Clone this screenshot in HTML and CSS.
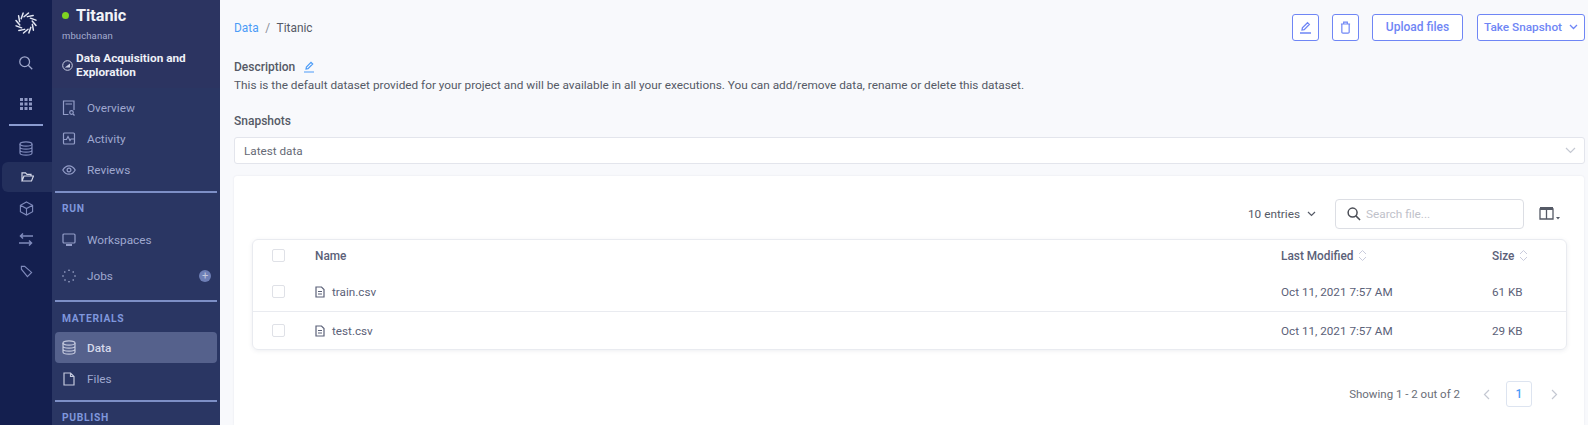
FILE: index.html
```html
<!DOCTYPE html>
<html lang="en">
<head>
<meta charset="utf-8">
<title>Titanic</title>
<link rel="stylesheet" href="styles.css">
</head>
<body>
<div class="app">
  <nav class="rail">
    <div class="rail-item logo"><svg width="24" height="24" viewBox="0 0 24 24" fill="none" stroke="#e3e7f3" stroke-width="1.500" stroke-linecap="round"><path d="M10 5.800L14.500 2"/><path transform="rotate(30 12 12)" d="M10 5.800L14.500 2"/><path transform="rotate(60 12 12)" d="M10 5.800L14.500 2"/><path transform="rotate(90 12 12)" d="M10 5.800L14.500 2"/><path transform="rotate(120 12 12)" d="M10 5.800L14.500 2"/><path transform="rotate(150 12 12)" d="M10 5.800L14.500 2"/><path transform="rotate(180 12 12)" d="M10 5.800L14.500 2"/><path transform="rotate(210 12 12)" d="M10 5.800L14.500 2"/><path transform="rotate(240 12 12)" d="M10 5.800L14.500 2"/><path transform="rotate(270 12 12)" d="M10 5.800L14.500 2"/><path transform="rotate(300 12 12)" d="M10 5.800L14.500 2"/><path transform="rotate(330 12 12)" d="M10 5.800L14.500 2"/></svg></div>
    <div class="rail-item search"><svg class="ic soft" width="16" height="16" viewBox="0 0 18 18"><circle cx="7.500" cy="7.500" r="5.500"/><path d="M11.500 11.500L16 16"/></svg></div>
    <div class="rail-item apps"><svg width="12" height="12" viewBox="0 0 12 12" fill="#8f99c4"><rect width="3" height="3"/><rect x="4.500" width="3" height="3"/><rect x="9" width="3" height="3"/><rect y="4.500" width="3" height="3"/><rect x="4.500" y="4.500" width="3" height="3"/><rect x="9" y="4.500" width="3" height="3"/><rect y="9" width="3" height="3"/><rect x="4.500" y="9" width="3" height="3"/><rect x="9" y="9" width="3" height="3"/></svg></div>
    <div class="rail-line"></div>
    <div class="rail-item db"><svg class="ic dim" width="14" height="15" viewBox="0 0 14 15"><ellipse cx="7" cy="3" rx="6" ry="2.200"/><path d="M1 3v9c0 1.200 2.700 2.200 6 2.200s6-1 6-2.200V3M1 6c0 1.200 2.700 2.200 6 2.200S13 7.200 13 6M1 9c0 1.200 2.700 2.200 6 2.200s6-1 6-2.200"/></svg></div>
    <div class="rail-item folder active"><svg class="ic bright" width="13" height="10" viewBox="0 0 13 10"><path d="M1 9V.8h3.500L6 2.300h4v1.800M1 9h9.500L12.500 4H3z"/></svg></div>
    <div class="rail-item cube"><svg class="ic dim" width="15" height="15" viewBox="0 0 16 16"><path d="M8 1l6.500 3.500v7L8 15l-6.500-3.500v-7zM1.500 4.500L8 8l6.500-3.500M8 8v7"/></svg></div>
    <div class="rail-item arrows"><svg class="ic dim thick" width="14" height="13" viewBox="0 0 14 13"><path d="M14 3H1.500M4 .5L1.500 3 4 5.500M0 10h12.500M10 7.500l2.500 2.500-2.500 2.500"/></svg></div>
    <div class="rail-item tag"><svg class="ic dim" width="13" height="13" viewBox="0 0 14 14"><path d="M1.500 4.500V1.500H5L12.500 8 8 12.500z"/></svg></div>
  </nav>

  <aside class="side">
    <header class="side-head">
      <div class="title-row"><span class="dot"></span><span class="title">Titanic</span></div>
      <div class="owner">mbuchanan</div>
      <div class="stage">
        <svg width="11" height="11" viewBox="0 0 11 11" fill="none" stroke="#c8cde2"><circle cx="5.500" cy="5.500" r="4.800"/><path d="M2.800 7.500L8 3.500v4z" fill="#c8cde2" stroke="none"/></svg>
        <span>Data Acquisition and Exploration</span>
      </div>
    </header>
    <div class="nav">
      <a class="nav-item first"><svg class="ic nav-ic" width="13" height="16" viewBox="0 0 13 16"><path d="M6 14.500H1V1h10.500v9M3 4h6.500"/><circle cx="9" cy="12.500" r="1.800"/><path d="M10.500 14l1.500 1.500"/></svg><span>Overview</span></a>
      <a class="nav-item"><svg class="ic nav-ic" width="13" height="13" viewBox="0 0 13 13"><rect x="1" y="1" width="11" height="11" rx="1"/><path d="M1 7.500h3l1.500-3 2 4 1-1.500H12"/></svg><span>Activity</span></a>
      <a class="nav-item"><svg class="ic nav-ic" width="14" height="10" viewBox="0 0 14 10"><path d="M.8 5C2.500 2 4.500.8 7 .8S11.500 2 13.200 5C11.500 8 9.500 9.200 7 9.200S2.500 8 .8 5z"/><circle cx="7" cy="5" r="1.900"/></svg><span>Reviews</span></a>
      <div class="rule"></div>
      <div class="section">RUN</div>
      <a class="nav-item"><svg class="ic nav-ic" width="14" height="13" viewBox="0 0 14 13"><rect x="1" y="1" width="12" height="9" rx="1"/><path d="M4 12h6" stroke-width="2"/></svg><span>Workspaces</span></a>
      <a class="nav-item jobs"><svg class="nav-ic" width="14" height="14" viewBox="0 0 14 14" fill="#aab3d6"><circle cx="7" cy="1.200" r=".8"/><circle cx="11.200" cy="3" r=".8"/><circle cx="13" cy="7" r=".8"/><circle cx="11.200" cy="11" r=".8"/><circle cx="7" cy="12.800" r=".8"/><circle cx="3" cy="11" r=".8"/><circle cx="1" cy="7" r=".8"/><circle cx="2.800" cy="3" r=".8"/></svg><span>Jobs</span><i class="plus">+</i></a>
      <div class="rule rule-b"></div>
      <div class="section materials">MATERIALS</div>
      <a class="nav-item current"><svg class="ic nav-ic light" width="14" height="15" viewBox="0 0 14 15"><ellipse cx="7" cy="3" rx="6" ry="2.200"/><path d="M1 3v9c0 1.200 2.700 2.200 6 2.200s6-1 6-2.200V3M1 6c0 1.200 2.700 2.200 6 2.200S13 7.200 13 6M1 9c0 1.200 2.700 2.200 6 2.200s6-1 6-2.200"/></svg><span>Data</span></a>
      <a class="nav-item"><svg class="ic nav-ic light" width="12" height="14" viewBox="0 0 12 14"><path d="M1 1h6.500L11 4.500V13H1zM7.500 1v3.500H11"/></svg><span>Files</span></a>
      <div class="rule rule-c"></div>
      <div class="section">PUBLISH</div>
    </div>
  </aside>

  <main class="main">
    <div class="top">
      <div class="crumbs"><a class="link">Data</a><span class="sep">/</span><span>Titanic</span></div>
      <div class="actions">
        <button class="btn square"><svg class="ic blue" width="13" height="13" viewBox="0 0 13 13"><path d="M3 9l.4-2.200L8.500 1.700l1.800 1.800L5.200 8.600zM1 12h11"/></svg></button>
        <button class="btn square"><svg class="ic blue" width="11" height="13" viewBox="0 0 12 14"><path d="M2 3.500V12a1.200 1.200 0 0 0 1.200 1.200h5.600A1.200 1.200 0 0 0 10 12V3.500M1 3.200h10M4 3V1.200h4V3"/></svg></button>
        <button class="btn upload">Upload files</button>
        <button class="btn snap">Take Snapshot<svg class="ic blue sw" width="9" height="6" viewBox="0 0 9 6"><path d="M1 1l3.500 3.500L8 1"/></svg></button>
      </div>
    </div>
    <div class="desc-label">Description<svg class="ic sky" width="12" height="12" viewBox="0 0 11 12"><path d="M2.500 8l.4-2L7.500 1.300l1.700 1.700L4.500 7.600zM.5 11h10"/></svg></div>
    <p class="desc">This is the default dataset provided for your project and will be available in all your executions. You can add/remove data, rename or delete this dataset.</p>
    <div class="snap-label">Snapshots</div>
    <div class="select"><span>Latest data</span><svg class="ic pale" width="11" height="7" viewBox="0 0 11 7"><path d="M1 1l4.500 4.500L10 1"/></svg></div>

    <section class="card">
      <div class="tools">
        <div class="entries">10 entries<svg class="ic grey" width="9" height="6" viewBox="0 0 9 6"><path d="M1 1l3.500 3.500L8 1"/></svg></div>
        <div class="searchbox"><svg class="ic ink" width="14" height="14" viewBox="0 0 15 15"><circle cx="6" cy="6" r="4.800"/><path d="M9.500 9.500L14 14"/></svg><span>Search file...</span></div>
        <div class="columns"><svg width="21" height="15" viewBox="0 0 21 15"><path d="M1 3h13v10H1zM7.500 3v10" fill="none" stroke="#555a66" stroke-width="1.300"/><rect x="1" y="1" width="13" height="3" fill="#555a66"/><path d="M17 11h4l-2 2.500z" fill="#555a66"/></svg></div>
      </div>
      <div class="table">
        <div class="row head">
          <span class="check"></span>
          <span class="name">Name</span>
          <span class="mod">Last Modified<svg class="sort" width="9" height="13" viewBox="0 0 9 13"><path d="M1 5l3.500-3.500L8 5M1 8l3.500 3.500L8 8"/></svg></span>
          <span class="size">Size<svg class="sort" width="9" height="13" viewBox="0 0 9 13"><path d="M1 5l3.500-3.500L8 5M1 8l3.500 3.500L8 8"/></svg></span>
        </div>
        <div class="row body first-row">
          <span class="check"></span>
          <span class="name"><svg class="ic file" width="10" height="12" viewBox="0 0 10 12"><path d="M1 1h5.500L9 3.500V11H1zM3 5.500h4M3 8h4"/></svg>train.csv</span>
          <span class="mod">Oct 11, 2021 7:57 AM</span>
          <span class="size">61 KB</span>
        </div>
        <div class="row body last-row">
          <span class="check"></span>
          <span class="name"><svg class="ic file" width="10" height="12" viewBox="0 0 10 12"><path d="M1 1h5.500L9 3.500V11H1zM3 5.500h4M3 8h4"/></svg>test.csv</span>
          <span class="mod">Oct 11, 2021 7:57 AM</span>
          <span class="size">29 KB</span>
        </div>
      </div>
      <div class="pager">
        <span class="showing">Showing 1 - 2 out of 2</span>
        <svg class="ic pale chev-l" width="7" height="11" viewBox="0 0 7 11"><path d="M6 1L1.500 5.500 6 10"/></svg>
        <span class="page">1</span>
        <svg class="ic pale chev-r" width="7" height="11" viewBox="0 0 7 11"><path d="M1 1l4.500 4.500L1 10"/></svg>
      </div>
    </section>
  </main>
</div>
</body>
</html>
```

FILE: styles.css
```css
* { box-sizing: border-box; }
html, body { margin: 0; height: 100%; overflow: hidden; }
body { font-family: Roboto, "Liberation Sans", sans-serif; font-size: 12px; color: #555a66; background: #f8f9fc; }
button { font-family: inherit; cursor: pointer; }
.ic { fill: none; stroke: #939dc8; stroke-width: 1.200; flex: none; }
.ic.dim { stroke: #7f8abb; }
.ic.soft { stroke: #a0a8cc; stroke-width: 1.400; }
.ic.thick { stroke-width: 1.500; }
.ic.bright { stroke: #d5d9ea; }
.ic.light { stroke: #c3c8dd; }
.ic.blue { stroke: #6f86f5; stroke-width: 1.300; }
.ic.sky { stroke: #4c9cf7; }
.ic.pale { stroke: #c4c8d2; }
.ic.grey { stroke: #555a66; margin-left: 7px; }
.ic.ink { stroke: #4a4d55; stroke-width: 1.600; }

.app { display: flex; width: 1588px; height: 425px; overflow: hidden; }

.rail { width: 52px; flex: none; background: #141f4f; display: flex; flex-direction: column; align-items: center; }
.rail-item { width: 100%; display: flex; align-items: center; justify-content: center; flex: none; }
.logo { height: 48px; padding-bottom: 2px; }
.search { height: 30px; }
.apps { height: 46px; padding-top: 5px; }
.rail-line { width: 34px; height: 2px; background: #8a9bd0; flex: none; }
.db { height: 36px; padding-top: 8px; }
.folder { height: 30px; margin-left: 2px; width: 50px; }
.folder.active { background: #232f5c; border-radius: 6px 0 0 6px; }
.cube { height: 32px; }
.arrows { height: 31px; }
.tag { height: 32px; }

.side { width: 168px; flex: none; background: #2a3663; color: #9fa8cf; }
.side-head { height: 88px; background: #2c3461; padding: 5px 12px 0 10px; }
.title-row { display: flex; align-items: center; height: 20px; }
.dot { width: 7px; height: 7px; border-radius: 50%; background: #7ed321; margin-right: 7px; }
.title { font-size: 16.200px; font-weight: 700; color: #f2f3f8; }
.owner { font-size: 9.500px; color: #a5acd0; margin-top: 4px; height: 14px; line-height: 14px; letter-spacing: .1px; }
.stage { display: flex; align-items: center; gap: 3px; margin-top: 8px; color: #eef0f7; font-size: 11.800px; font-weight: 700; line-height: 14px; }
.stage svg { flex: none; }

.nav { padding: 5px 3px 0; }
.nav-item { display: flex; align-items: center; height: 31px; padding-left: 6px; font-size: 11.800px; color: #9fa8cf; }
.nav-item.first { height: 30px; }
.nav-item svg { width: 16px; }
.nav-item svg + span { margin-left: 10px; }
.rule { height: 2px; background: #7d8fc6; margin: 6px 0 0; }
.rule-b { margin-top: 4px; }
.rule-c { margin-top: 6px; }
.section { font-size: 10.300px; font-weight: 700; letter-spacing: .7px; color: #7f97dc; padding-left: 7px; height: 31px; line-height: 31px; }
.section.materials { height: 27px; line-height: 27px; margin-top: 3px; }
.nav-item.jobs { height: 41px; padding-right: 6px; }
.plus { margin-left: auto; width: 12px; height: 12px; border-radius: 50%; background: #6e7fb6; color: #c3c8dd; font-style: normal; font-size: 11px; line-height: 12px; text-align: center; }
.nav-item.current { background: #55618c; border-radius: 4px; color: #d5d9ea; font-weight: 500; }

.main { flex: 1; min-width: 0; padding: 13px 3px 0 14px; }
.top { display: flex; justify-content: space-between; align-items: center; height: 28px; }
.crumbs { display: flex; align-items: center; font-size: 11.900px; color: #555a66; padding-top: 2px; }
.link { color: #4c9cf7; }
.sep { margin: 0 6.500px; color: #8a8e98; }
.actions { display: flex; align-items: center; }
.btn { height: 27px; border: 1px solid #6f86f5; background: #fff; border-radius: 3px; color: #6f86f5; font-size: 12px; font-weight: 500; display: flex; align-items: center; justify-content: center; padding: 0; }
.square { width: 27px; margin-right: 13px; }
.upload { width: 91px; margin-right: 14px; }
.snap { width: 108px; font-size: 11.800px; }
.sw { margin-left: 7px; }

.desc-label { display: flex; align-items: center; font-size: 12px; font-weight: 500; color: #555a66; margin-top: 18px; height: 16px; }
.desc-label svg { margin-left: 8px; }
.desc { margin: 2px 0 0; font-size: 11.800px; line-height: 16px; color: #555a66; }
.snap-label { margin-top: 20px; height: 16px; line-height: 16px; font-size: 12px; font-weight: 500; color: #555a66; }
.select { display: flex; justify-content: space-between; align-items: center; height: 27px; margin-top: 8px; background: #fff; border: 1px solid #e3e5ec; border-radius: 3px; padding: 0 8px 0 9px; font-size: 11.700px; color: #666a75; }

.card { background: #fff; border-radius: 3px 3px 0 0; margin: 12px 1px 0 0; height: 249px; padding: 23px 17px 0 18px; box-shadow: 0 0 2px rgba(80, 90, 120, .12); }
.tools { display: flex; justify-content: flex-end; align-items: center; height: 29px; }
.entries { display: flex; align-items: center; font-size: 11.800px; color: #555a66; margin-right: 19px; }
.searchbox { display: flex; align-items: center; width: 189px; height: 30px; border: 1px solid #dcdee4; border-radius: 4px; padding-left: 11px; color: #bfc2ca; font-size: 11.800px; }
.searchbox span { margin-left: 5px; }
.columns { margin-left: 15px; margin-right: 7px; height: 15px; display: flex; }

.table { margin-top: 11px; border: 1px solid #e9ebf0; border-radius: 6px; height: 111px; box-shadow: 0 1px 4px rgba(80, 90, 120, .1); }
.row { display: flex; align-items: center; color: #5b6178; font-size: 11.700px; }
.row.head { height: 31px; font-weight: 500; font-size: 11.850px; }
.first-row { height: 41px; border-bottom: 1px solid #e9ebf0; padding-top: 1.500px; }
.last-row { height: 37px; }
.check { width: 13px; height: 13px; border: 1px solid #dfe1e7; border-radius: 2px; background: #fff; margin-left: 19px; flex: none; }
.name { display: flex; align-items: center; margin-left: 30px; width: 966px; flex: none; }
.file { stroke: #5b6178; margin-right: 7px; }
.mod { width: 211px; flex: none; display: flex; align-items: center; }
.size { display: flex; align-items: center; }
.sort { fill: none; stroke: #c9cbdc; margin-left: 5px; }

.pager { display: flex; justify-content: flex-end; align-items: center; margin-top: 31px; font-size: 11.500px; color: #6a6e78; }
.chev-l { margin-left: 23px; }
.page { width: 26px; height: 26px; border: 1px solid #dde4f0; border-radius: 3px; margin-left: 16px; color: #4c9cf7; display: flex; align-items: center; justify-content: center; font-weight: 500; font-size: 12px; }
.chev-r { margin-left: 19px; margin-right: 9px; }
```
